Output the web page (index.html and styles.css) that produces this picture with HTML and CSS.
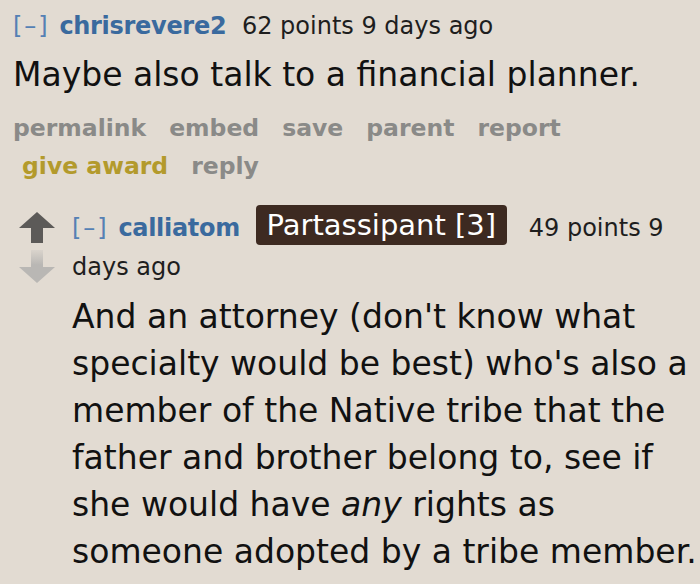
FILE: index.html
```html
<!DOCTYPE html>
<html>
<head>
<meta charset="utf-8">
<link rel="stylesheet" href="styles.css">
</head>
<body>
<div class="comment">
  <div class="tagline">
    <span class="expand">[–]</span>
    <span class="author">chrisrevere2</span>
    <span class="score">62 points</span> <span class="time">9 days ago</span>
  </div>
  <div class="md"><p>Maybe also talk to a financial planner.</p></div>
  <ul class="buttons">
    <li>permalink</li>
    <li>embed</li>
    <li>save</li>
    <li>parent</li>
    <li>report</li>
    <li class="award">give award</li>
    <li>reply</li>
  </ul>
  <div class="child">
    <div class="comment reply-comment">
      <div class="midcol">
        <svg class="arrow" width="38" height="34" viewBox="0 0 38 34">
          <path d="M19 1 L37 17 L25 17 L25 32 L13 32 L13 17 L1 17 Z" fill="#5c5a58"/>
        </svg>
        <svg class="arrow" width="38" height="36" viewBox="0 0 38 36">
          <defs>
            <linearGradient id="fade" x1="0" y1="0" x2="0" y2="1">
              <stop offset="0" stop-color="#b9b7b4" stop-opacity="0.2"/>
              <stop offset="0.45" stop-color="#b9b7b4" stop-opacity="1"/>
            </linearGradient>
          </defs>
          <path d="M13 1 L25 1 L25 18 L37 18 L19 34 L1 18 L13 18 Z" fill="url(#fade)"/>
        </svg>
      </div>
      <div class="entry">
        <div class="tagline">
          <span class="expand">[–]</span>
          <span class="author">calliatom</span>
          <span class="flair">Partassipant [3]</span>
          <span class="score">49 points</span> <span class="time">9 days ago</span>
        </div>
        <div class="md"><p>And an attorney (don't know what specialty would be best) who's also a member of the Native tribe that the father and brother belong to, see if she would have <em>any</em> rights as someone adopted by a tribe member.</p></div>
      </div>
    </div>
  </div>
</div>
</body>
</html>
```

FILE: styles.css
```css
html, body {
  margin: 0;
  padding: 0;
  background: #e2dbd2;
}
body {
  font-family: "DejaVu Sans", Verdana, sans-serif;
  color: #111;
  width: 700px;
  height: 584px;
  overflow: hidden;
}
.comment {
  padding: 7px 0 0 13px;
}
.tagline {
  font-size: 24px;
  line-height: 39px;
  color: #1e1e1e;
}
.expand {
  color: #5580b4;
  font-weight: normal;
  letter-spacing: 2px;
  margin-right: 2px;
}
.author {
  color: #3a6a9e;
  font-weight: bold;
  letter-spacing: -0.3px;
  margin-right: 8px;
}
.md p {
  margin: 0;
  font-size: 33px;
  line-height: 47px;
}
.comment > .md {
  margin: 5px 0 11px;
}
.buttons {
  list-style: none;
  margin: 0;
  padding: 0;
  display: flex;
  flex-wrap: wrap;
  column-gap: 23px;
  row-gap: 0;
  font-size: 23.5px;
  font-weight: bold;
  line-height: 38px;
  color: #8a8a88;
  width: 600px;
}
.buttons .award {
  color: #b39a2c;
  margin-left: 9px;
}
.child {
  margin-top: 16px;
  margin-left: -13px;
}
.reply-comment {
  display: flex;
  padding: 0 0 0 18px;
  column-gap: 16px;
}
.midcol {
  display: flex;
  flex-direction: column;
  padding-top: 10px;
  row-gap: 4px;
  flex: none;
}
.arrow {
  display: block;
}
.entry {
  flex: 1;
  min-width: 0;
}
.reply-comment .tagline {
  padding-top: 4px;
}
.flair {
  display: inline-block;
  background: #3d2a21;
  color: #fff;
  font-size: 29px;
  line-height: 40px;
  padding: 0 11px;
  border-radius: 4px;
  margin-right: 14px;
  vertical-align: 1px;
}
.reply-comment .md {
  margin-top: 6px;
}
```
